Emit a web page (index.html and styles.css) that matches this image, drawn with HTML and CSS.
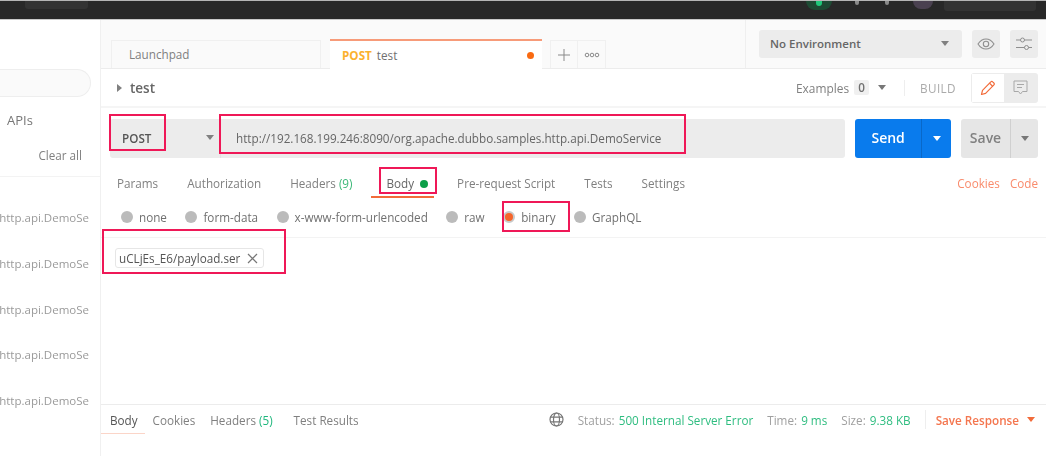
FILE: index.html
```html
<!DOCTYPE html>
<html lang="en">
<head>
  <meta charset="UTF-8">
  <title>Postman - test</title>
  <link rel="stylesheet" href="styles.css">
</head>
<body>
  <div class="app">
    <div class="topbar">
      <span class="top-btn top-btn-left"></span>
      <span class="top-sync"><i></i></span>
      <span class="top-dot top-dot-a"></span>
      <span class="top-dot top-dot-b"></span>
      <span class="top-avatar"></span>
      <span class="top-btn top-btn-right"></span>
    </div>

    <div class="layout">
      <aside class="sidebar">
        <div class="search"></div>
        <div class="side-tab">APIs</div>
        <div class="clear-all">Clear all</div>
        <ul class="history">
          <li>dubbo.samples.http.api.DemoSe</li>
          <li>dubbo.samples.http.api.DemoSe</li>
          <li>dubbo.samples.http.api.DemoSe</li>
          <li>dubbo.samples.http.api.DemoSe</li>
          <li>dubbo.samples.http.api.DemoSe</li>
        </ul>
      </aside>

      <main class="main">
        <div class="tabbar">
          <div class="tab tab-plain">Launchpad</div>
          <div class="tab tab-active">
            <span class="method">POST</span>
            <span class="tab-name">test</span>
            <span class="unsaved"></span>
          </div>
          <div class="tab-tool tab-plus">
            <svg width="14" height="14" viewBox="0 0 14 14"><path d="M7 1v12M1 7h12" stroke="#8a8a8a" stroke-width="1" fill="none"/></svg>
          </div>
          <div class="tab-tool tab-more">
            <svg width="16" height="6" viewBox="0 0 16 6" fill="none" stroke="#8a8a8a" stroke-width="1"><circle cx="3" cy="3" r="1.8"/><circle cx="8" cy="3" r="1.8"/><circle cx="13" cy="3" r="1.8"/></svg>
          </div>
          <div class="env-area">
            <div class="env-select">
              <span>No Environment</span>
              <b class="caret"></b>
            </div>
            <div class="icon-btn">
              <svg width="18" height="12" viewBox="0 0 18 12" fill="none" stroke="#8f8f8f" stroke-width="1.1"><path d="M1 6c2.2-3.4 4.900-5 8-5s5.800 1.600 8 5c-2.200 3.400-4.900 5-8 5S3.200 9.400 1 6z"/><circle cx="9" cy="6" r="2.700"/></svg>
            </div>
            <div class="icon-btn">
              <svg width="16" height="14" viewBox="0 0 16 14" fill="none" stroke="#8f8f8f" stroke-width="1"><path d="M0 3h4.500M8.500 3H16M0 10.500h8.500M12.500 10.500H16"/><circle cx="6.500" cy="3" r="2"/><circle cx="10.500" cy="10.500" r="2"/></svg>
            </div>
          </div>
        </div>

        <div class="titlebar">
          <b class="caret-right"></b>
          <span class="req-title">test</span>
          <div class="title-right">
            <span class="examples">Examples</span>
            <span class="count">0</span>
            <b class="caret caret-dark"></b>
            <span class="title-sep"></span>
            <span class="build">BUILD</span>
            <div class="mode-switch">
              <span class="mode mode-on">
                <svg width="16" height="16" viewBox="0 0 16 16" fill="none" stroke="#f26b3a" stroke-width="1.200" stroke-linejoin="round"><path d="M1.500 14.500l1-4.200 8.300-8.500a1.300 1.300 0 0 1 1.900 0l1.200 1.200a1.300 1.300 0 0 1 0 1.900l-8.300 8.500z"/><path d="M9.500 3.200l3.300 3.300"/></svg>
              </span>
              <span class="mode">
                <svg width="15" height="15" viewBox="0 0 15 15" fill="none" stroke="#a8a8a8" stroke-width="1"><path d="M1 1h13v10.500H9.500L7.500 14l-2-2.500H1z"/><path d="M4 4.500h7M4 7.500h5"/></svg>
              </span>
            </div>
          </div>
        </div>

        <div class="urlbar">
          <div class="url-group">
            <div class="method-select">
              <span>POST</span>
              <b class="caret"></b>
            </div>
            <div class="url-input">http://192.168.199.246:8090/org.apache.dubbo.samples.http.api.DemoService</div>
          </div>
          <div class="split-btn btn-send">
            <span class="split-label">Send</span>
            <span class="split-arrow"><b class="caret caret-white"></b></span>
          </div>
          <div class="split-btn btn-save">
            <span class="split-label">Save</span>
            <span class="split-arrow"><b class="caret caret-dark"></b></span>
          </div>
        </div>

        <div class="req-tabs">
          <span class="req-tab">Params</span>
          <span class="req-tab">Authorization</span>
          <span class="req-tab">Headers <em>(9)</em></span>
          <span class="req-tab tab-body">Body <i class="green-dot"></i></span>
          <span class="req-tab">Pre-request Script</span>
          <span class="req-tab">Tests</span>
          <span class="req-tab">Settings</span>
          <span class="req-links"><a>Cookies</a><a>Code</a></span>
        </div>

        <div class="body-types">
          <label class="radio"><i></i>none</label>
          <label class="radio"><i></i>form-data</label>
          <label class="radio"><i></i>x-www-form-urlencoded</label>
          <label class="radio"><i></i>raw</label>
          <label class="radio radio-on"><i></i>binary</label>
          <label class="radio"><i></i>GraphQL</label>
        </div>

        <div class="body-panel">
          <div class="file-chip">
            <span>uCLjEs_E6/payload.ser</span>
            <svg width="11" height="11" viewBox="0 0 11 11"><path d="M1 1l9 9M10 1l-9 9" stroke="#777" stroke-width="1.200" fill="none"/></svg>
          </div>
        </div>

        <div class="resp-bar">
          <span class="resp-tab resp-on">Body</span>
          <span class="resp-tab">Cookies</span>
          <span class="resp-tab">Headers <em>(5)</em></span>
          <span class="resp-tab resp-last">Test Results</span>
          <div class="resp-meta">
            <svg width="15" height="15" viewBox="0 0 15 15" fill="none" stroke="#777" stroke-width="1.200"><circle cx="7.500" cy="7.500" r="6.500"/><ellipse cx="7.500" cy="7.500" rx="3" ry="6.500"/><path d="M1.200 5.200h12.600M1.200 9.800h12.600"/></svg>
            <span class="stat">Status: <em>500 Internal Server Error</em></span>
            <span class="stat">Time: <em>9 ms</em></span>
            <span class="stat">Size: <em>9.38 KB</em></span>
            <span class="meta-sep"></span>
            <span class="save-resp">Save Response</span>
            <b class="caret caret-orange"></b>
          </div>
        </div>
      </main>
    </div>

    <!-- red boxes drawn on top of the screenshot -->
    <div class="mark mark-post"></div>
    <div class="mark mark-url"></div>
    <div class="mark mark-body"></div>
    <div class="mark mark-binary"></div>
    <div class="mark mark-file"></div>
  </div>
</body>
</html>
```

FILE: styles.css
```css
html, body {
  margin: 0;
  padding: 0;
  background: #fff;
}
body {
  font-family: "Open Sans", "Noto Sans", Arial, sans-serif;
  font-size: 11.700px;
  color: #707070;
}
em {
  font-style: normal;
}
.app {
  position: relative;
  width: 1046px;
  height: 456px;
  overflow: hidden;
  filter: blur(0.5px);
}

/* top bar */
.topbar {
  display: flex;
  height: 18px;
  background: #282828;
  border-top: 1px solid #b5b5b5;
  border-bottom: 1px solid #c9c9c9;
  overflow: hidden;
}
.top-btn {
  height: 8px;
  background: #333;
  border-radius: 0 0 3px 3px;
}
.top-btn-left {
  width: 63px;
  margin-left: 25px;
}
.top-sync {
  display: flex;
  justify-content: center;
  width: 26px;
  height: 9px;
  margin-left: 718px;
  background: #1d4a33;
  border-radius: 0 0 12px 12px;
}
.top-sync i {
  width: 6px;
  height: 5px;
  background: #20c77a;
  border-radius: 0 0 3px 3px;
}
.top-dot {
  width: 4px;
  height: 4px;
  background: #8a8a8a;
  border-radius: 0 0 2px 2px;
}
.top-dot-a {
  margin-left: 23px;
}
.top-dot-b {
  margin-left: 26px;
}
.top-avatar {
  width: 20px;
  height: 8px;
  margin-left: 24px;
  background: #4a4150;
  border-radius: 0 0 10px 10px;
}
.top-btn-right {
  width: 92px;
  height: 10px;
  margin-left: 11px;
}

.layout {
  display: flex;
  height: 436px;
}

/* history sidebar */
.sidebar {
  flex: none;
  width: 100px;
  border-right: 1px solid #f0f0f0;
}
.search {
  width: 91px;
  height: 28px;
  margin-top: 49px;
  box-sizing: border-box;
  background: #fafafa;
  border: 1px solid #eee;
  border-left: none;
  border-radius: 0 15px 15px 0;
}
.side-tab {
  margin-top: 13px;
  padding-left: 7px;
  font-size: 13px;
  line-height: 20px;
  color: #777;
}
.clear-all {
  margin-top: 15px;
  padding-right: 18px;
  height: 31px;
  line-height: 20px;
  text-align: right;
  color: #808080;
  border-bottom: 1px solid #f3f3f3;
}
.history {
  list-style: none;
  margin: 31px 0 0;
  padding: 0;
}
.history li {
  display: flex;
  justify-content: flex-end;
  height: 45.800px;
  padding-right: 11px;
  overflow: hidden;
  white-space: nowrap;
  font-size: 11.500px;
  color: #9a9a9a;
  line-height: 20px;
}

.main {
  flex: 1;
  min-width: 0;
  display: flex;
  flex-direction: column;
}

/* tab row */
.tabbar {
  display: flex;
  align-items: flex-end;
  height: 49px;
  box-sizing: border-box;
  padding-left: 10px;
  background: #fafafa;
  border-bottom: 1px solid #ececec;
}
.tab {
  height: 28px;
  box-sizing: border-box;
  line-height: 27px;
  background: #fafafa;
  border: 1px solid #f0f0f0;
  border-bottom: none;
}
.tab-plain {
  width: 210px;
  padding-left: 17px;
  color: #808080;
}
.tab-active {
  display: flex;
  align-items: center;
  width: 212px;
  height: 30px;
  margin-left: 9px;
  margin-bottom: -1px;
  padding: 0 8px 0 12px;
  background: #fff;
  border: none;
  border-top: 2px solid #f79b79;
}
.method {
  font-weight: 700;
  color: #fbb12e;
  margin-right: 5px;
}
.unsaved {
  width: 7px;
  height: 7px;
  margin-left: auto;
  background: #f96a11;
  border-radius: 50%;
}
.tab-tool {
  display: flex;
  align-items: center;
  justify-content: center;
  width: 28px;
  height: 28px;
  box-sizing: border-box;
  background: #fafafa;
  border: 1px solid #f0f0f0;
  border-bottom: none;
}
.tab-plus {
  margin-left: 8px;
}
.tab-more {
  border-left: none;
}
.env-area {
  display: flex;
  align-items: center;
  gap: 10px;
  height: 48px;
  box-sizing: border-box;
  margin-left: auto;
  margin-right: 8px;
  padding: 0 0 0 13px;
  border-left: 1px solid #efefef;
}
.env-select {
  display: flex;
  align-items: center;
  justify-content: space-between;
  width: 203px;
  height: 28px;
  box-sizing: border-box;
  padding: 0 13px 2px 11px;
  background: #ececec;
  border-radius: 3px;
  font-size: 11.500px;
  font-weight: 600;
  color: #666;
}
.icon-btn {
  display: flex;
  align-items: center;
  justify-content: center;
  width: 28px;
  height: 28px;
  background: #ececec;
  border-radius: 3px;
}
.caret {
  display: inline-block;
  width: 0;
  height: 0;
  border-left: 4px solid transparent;
  border-right: 4px solid transparent;
  border-top: 5px solid #808080;
}
.caret-dark {
  border-top-color: #777;
}
.caret-white {
  border-top-color: #fff;
}
.caret-orange {
  border-top-color: #f26b3a;
}

/* request name row */
.titlebar {
  display: flex;
  align-items: center;
  height: 39px;
  box-sizing: border-box;
  padding: 0 8px 0 16px;
  border-bottom: 2px solid #f5f5f5;
}
.caret-right {
  width: 0;
  height: 0;
  border-top: 4px solid transparent;
  border-bottom: 4px solid transparent;
  border-left: 5px solid #808080;
  margin-right: 8px;
}
.req-title {
  padding-top: 1px;
  font-size: 13.500px;
  font-weight: 600;
  color: #666;
}
.title-right {
  display: flex;
  align-items: center;
  margin-left: auto;
}
.examples {
  font-size: 11.900px;
  color: #808080;
}
.count {
  width: 15px;
  height: 15px;
  margin: 0 9px 0 5px;
  line-height: 15px;
  text-align: center;
  background: #f0f0f0;
  border-radius: 2px;
  font-weight: 600;
}
.title-sep {
  width: 1px;
  height: 16px;
  margin: 0 15px 0 18px;
  background: #eee;
}
.build {
  color: #aaa;
  letter-spacing: 0.4px;
}
.mode-switch {
  display: flex;
  width: 67px;
  height: 30px;
  box-sizing: border-box;
  margin-left: 15px;
  padding: 1px;
  background: #ececec;
  border-radius: 3px;
}
.mode {
  display: flex;
  align-items: center;
  justify-content: center;
  width: 32px;
}
.mode-on {
  background: #fff;
}

/* method + url row */
.urlbar {
  display: flex;
  align-items: stretch;
  gap: 10px;
  height: 39px;
  margin: 11px 8px 0 9px;
}
.url-group {
  display: flex;
  flex: 1;
  background: #ececec;
  border-radius: 3px;
}
.method-select {
  display: flex;
  align-items: center;
  justify-content: space-between;
  width: 110px;
  box-sizing: border-box;
  padding: 0 6px 2px 12px;
  font-weight: 600;
  color: #555;
}
.url-input {
  flex: 1;
  padding-left: 15px;
  line-height: 38px;
  color: #666;
  border-left: 1px solid #e2e2e2;
}
.split-btn {
  display: flex;
  font-size: 14px;
  font-weight: 600;
  border-radius: 3px;
}
.split-label {
  line-height: 38px;
  text-align: center;
}
.split-arrow {
  display: flex;
  align-items: center;
  justify-content: center;
}
.btn-send {
  width: 96px;
  color: #fff;
  background: #097bed;
}
.btn-send .split-label {
  width: 67px;
}
.btn-send .split-arrow {
  width: 29px;
  border-left: 1px solid #0868c9;
}
.btn-save {
  width: 77px;
  color: #808080;
  background: #e6e6e6;
}
.btn-save .split-label {
  width: 49px;
}
.btn-save .split-arrow {
  width: 27px;
  border-left: 1px solid #d0d0d0;
}

/* request tabs */
.req-tabs {
  display: flex;
  align-items: center;
  height: 28px;
  margin-top: 11px;
  padding: 0 8px 0 16px;
  color: #808080;
}
.req-tab {
  position: relative;
  margin-right: 29px;
}
.req-tab em {
  color: #3cb878;
}
.tab-body {
  margin-left: 5px;
  color: #666;
}
.tab-body::after {
  content: "";
  position: absolute;
  left: -15px;
  right: -6px;
  bottom: -7px;
  height: 2px;
  background: #f26b3a;
}
.green-dot {
  display: inline-block;
  width: 8px;
  height: 8px;
  margin-left: 3px;
  background: #0c9f48;
  border-radius: 50%;
}
.req-links {
  display: flex;
  gap: 10px;
  margin-left: auto;
  color: #f98b6c;
}

/* body type radios */
.body-types {
  display: flex;
  align-items: center;
  height: 41px;
  padding: 0 0 0 20px;
  border-bottom: 1px solid #f3f3f3;
  box-sizing: border-box;
  gap: 18.500px;
}
.radio {
  display: flex;
  align-items: center;
  gap: 6px;
  color: #707070;
}
.radio i {
  width: 12px;
  height: 12px;
  background: #bbb;
  border-radius: 50%;
}
.radio-on i {
  width: 8px;
  height: 8px;
  background: #f5652b;
  border: 2px solid #c9c9c9;
}

.body-panel {
  flex: 1;
  padding: 10px 0 0 14px;
}
.file-chip {
  display: inline-flex;
  align-items: center;
  gap: 7px;
  height: 18px;
  padding: 0 5px 0 3px;
  border: 1px solid #e6e6e6;
  border-radius: 3px;
  color: #555;
}

/* response bar */
.resp-bar {
  display: flex;
  align-items: stretch;
  height: 29px;
  margin-bottom: 22px;
  padding-left: 9px;
  border-top: 1px solid #ececec;
  color: #808080;
}
.resp-tab {
  margin-right: 15px;
  line-height: 30px;
}
.resp-tab em {
  color: #1fb77d;
}
.resp-last {
  margin-left: 6px;
}
.resp-on {
  position: relative;
  color: #555;
}
.resp-on::after {
  content: "";
  position: absolute;
  left: -9px;
  right: -7px;
  bottom: 0;
  height: 1px;
  background: #fbd5c8;
}
.resp-meta {
  display: flex;
  align-items: center;
  margin-left: auto;
  margin-right: 11px;
  padding-top: 0;
  gap: 8px;
}
.stat {
  margin-left: 6px;
  color: #a0a0a0;
}
.stat em {
  margin-left: 1px;
  color: #2fbd80;
}
.meta-sep {
  width: 1px;
  height: 19px;
  margin-left: 6px;
  background: #eee;
}
.save-resp {
  margin-left: 2px;
  font-weight: 600;
  color: #f4764f;
}

/* annotation boxes */
.mark {
  position: absolute;
  box-sizing: border-box;
  border: 2px solid #ef1857;
}
.mark-post {
  left: 109px;
  top: 114px;
  width: 57px;
  height: 37px;
}
.mark-url {
  left: 219px;
  top: 114px;
  width: 467px;
  height: 40px;
}
.mark-body {
  left: 379px;
  top: 167px;
  width: 58px;
  height: 27px;
}
.mark-binary {
  left: 502px;
  top: 201px;
  width: 68px;
  height: 31px;
}
.mark-file {
  left: 102px;
  top: 229px;
  width: 184px;
  height: 45px;
}
```
